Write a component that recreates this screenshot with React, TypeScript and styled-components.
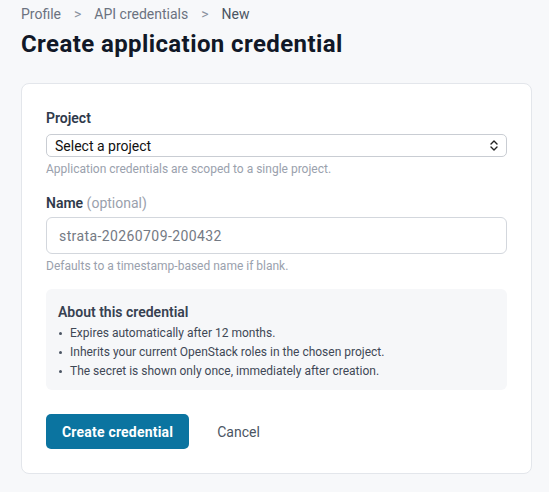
import { useState } from 'react';
import styled, { createGlobalStyle } from 'styled-components';

const GlobalStyle = createGlobalStyle`
  html, body {
    margin: 0;
    padding: 0;
    background: #f7f8fa;
    font-family: Roboto, "Liberation Sans", Arial, sans-serif;
    color: #1f2937;
  }
  * {
    box-sizing: border-box;
  }
`;

const Page = styled.div`
  padding: 4px 17px 18px 21px;
`;

const Breadcrumbs = styled.nav`
  display: flex;
  align-items: center;
  height: 20px;
  font-size: 14px;
  color: #6b7280;
`;

const Crumb = styled.a<{ $current?: boolean }>`
  color: ${props => props.$current ? '#4b5563' : '#6b7280'};
  text-decoration: none;
  cursor: ${props => props.$current ? 'default' : 'pointer'};
`;

const Separator = styled.span`
  margin: 0 13px;
  color: #8b93a0;
`;

const Title = styled.h1`
  margin: 4px 0 23px;
  font-size: 24px;
  line-height: 32px;
  font-weight: 700;
  letter-spacing: 0.4px;
  color: #111827;
`;

const Card = styled.form`
  background: #fff;
  border: 1px solid #e3e6eb;
  border-radius: 8px;
  padding: 24px;
  display: flex;
  flex-direction: column;
`;

const Field = styled.div`
  display: flex;
  flex-direction: column;
  margin-bottom: 16px;
`;

const Label = styled.label`
  font-size: 14px;
  line-height: 20px;
  font-weight: 600;
  color: #2f3a4b;
  margin-bottom: 4px;
`;

const Optional = styled.span`
  font-weight: 400;
  color: #9aa1ad;
`;

const SelectWrap = styled.div`
  position: relative;
  margin-top: 2px;
`;

const Select = styled.select`
  appearance: none;
  width: 100%;
  height: 23px;
  padding: 0 24px 0 8px;
  font-family: inherit;
  font-size: 14px;
  color: #111;
  background: #fff;
  border: 1px solid #c9cdd3;
  border-radius: 5px;
  outline: none;
`;

const SelectArrow = styled.svg`
  position: absolute;
  right: 9px;
  top: 6px;
  pointer-events: none;
`;

const TextInput = styled.input`
  height: 37px;
  width: 100%;
  padding: 0 12px;
  font-family: inherit;
  font-size: 14px;
  letter-spacing: 0.4px;
  color: #111827;
  background: #fff;
  border: 1px solid #d3d7dd;
  border-radius: 6px;
  outline: none;

  &::placeholder {
    color: #747a84;
  }
`;

const Help = styled.p`
  margin: 4px 0 0;
  font-size: 12px;
  line-height: 16px;
  color: #9aa1ad;
`;

const InfoBox = styled.div`
  margin-top: -1px;
  background: #f6f7f9;
  border-radius: 6px;
  padding: 13px 12px 9px;
`;

const InfoTitle = styled.div`
  font-size: 14px;
  line-height: 20px;
  font-weight: 600;
  color: #374151;
  margin-bottom: 2px;
`;

const InfoList = styled.ul`
  list-style: none;
  margin: 0;
  padding: 0;
`;

const InfoItem = styled.li`
  display: flex;
  align-items: center;
  gap: 8px;
  font-size: 12px;
  line-height: 19px;
  color: #3f4856;
`;

const Dot = styled.span`
  width: 3px;
  height: 3px;
  margin-left: 1px;
  border-radius: 50%;
  background: #4b5563;
  flex-shrink: 0;
`;

const Actions = styled.div`
  display: flex;
  align-items: center;
  gap: 16px;
  margin-top: 24px;
`;

const PrimaryButton = styled.button`
  height: 35px;
  padding: 0 16px;
  font-family: inherit;
  font-size: 14px;
  font-weight: 700;
  letter-spacing: 0.2px;
  color: #fff;
  background: #0b74a0;
  border: none;
  border-radius: 5px;
  cursor: pointer;
`;

const GhostButton = styled.button`
  height: 35px;
  padding: 0 12px;
  font-family: inherit;
  font-size: 14px;
  color: #4b5563;
  background: none;
  border: none;
  cursor: pointer;
`;

const notes = [
  'Expires automatically after 12 months.',
  'Inherits your current OpenStack roles in the chosen project.',
  'The secret is shown only once, immediately after creation.',
];

const App = () => {
  const [project, setProject] = useState('');
  const [name, setName] = useState('');

  return (
    <>
      <GlobalStyle />
      <Page>
        <Breadcrumbs>
          <Crumb>Profile</Crumb>
          <Separator>&gt;</Separator>
          <Crumb>API credentials</Crumb>
          <Separator>&gt;</Separator>
          <Crumb $current>New</Crumb>
        </Breadcrumbs>
        <Title>Create application credential</Title>

        <Card onSubmit={e => e.preventDefault()}>
          <Field>
            <Label htmlFor="project">Project</Label>
            <SelectWrap>
              <Select id="project" value={project} onChange={e => setProject(e.target.value)}>
                <option value="">Select a project</option>
              </Select>
              <SelectArrow width="8" height="11" viewBox="0 0 8 11" fill="none">
                <path d="M1 4l3-3 3 3M1 7l3 3 3-3" stroke="#222" strokeWidth="1.4" strokeLinecap="round" strokeLinejoin="round" />
              </SelectArrow>
            </SelectWrap>
            <Help>Application credentials are scoped to a single project.</Help>
          </Field>

          <Field>
            <Label htmlFor="name">
              Name <Optional>(optional)</Optional>
            </Label>
            <TextInput
              id="name"
              placeholder="strata-20260709-200432"
              value={name}
              onChange={e => setName(e.target.value)}
            />
            <Help>Defaults to a timestamp-based name if blank.</Help>
          </Field>

          <InfoBox>
            <InfoTitle>About this credential</InfoTitle>
            <InfoList>
              {notes.map(note => (
                <InfoItem key={note}>
                  <Dot />
                  {note}
                </InfoItem>
              ))}
            </InfoList>
          </InfoBox>

          <Actions>
            <PrimaryButton type="submit">Create credential</PrimaryButton>
            <GhostButton type="button">Cancel</GhostButton>
          </Actions>
        </Card>
      </Page>
    </>
  );
};

export default App;
